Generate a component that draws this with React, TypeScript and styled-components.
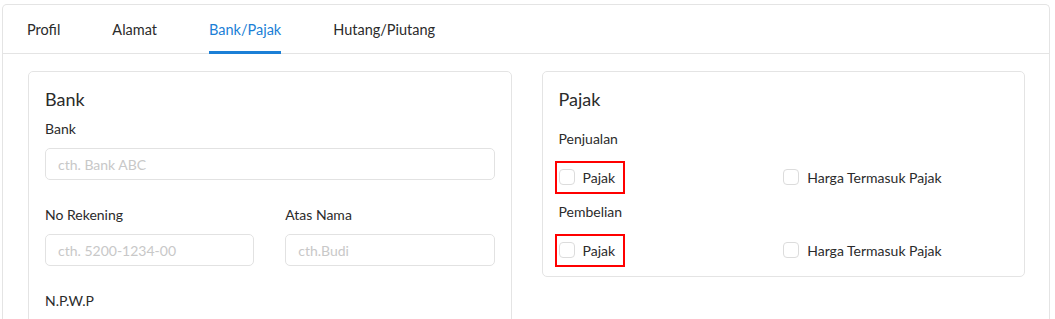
import React from 'react';
import styled, {createGlobalStyle} from 'styled-components';

const GlobalStyle = createGlobalStyle`
  body {
    margin: 0;
    background: #fff;
    font-family: Lato, "Liberation Sans", sans-serif;
    color: #333;
  }
  * {
    box-sizing: border-box;
  }
`;

const Page = styled.div`
  padding: 4px 5px 0 2px;
`;

const Panel = styled.div`
  border: 1px solid #e4e4e4;
  border-bottom: none;
  border-radius: 5px 5px 0 0;
  height: 315px;
  overflow: hidden;
`;

const TabBar = styled.div`
  display: flex;
  gap: 52px;
  height: 49px;
  padding: 0 24px;
  border-bottom: 1px solid #e4e4e4;
`;

const Tab = styled.div<{$active?: boolean}>`
  display: flex;
  align-items: center;
  font-size: 14.5px;
  color: ${props => (props.$active ? '#1b7fd6' : '#2b2b2b')};
  border-bottom: 3px solid ${props => (props.$active ? '#1b7fd6' : 'transparent')};
  padding-top: 3px;
  margin-bottom: -1px;
`;

const Content = styled.div`
  display: grid;
  grid-template-columns: 1fr 1fr;
  gap: 30px;
  padding: 17px 24px 0 25px;
  align-items: start;
`;

const Card = styled.div`
  border: 1px solid #e4e4e4;
  border-radius: 5px;
  padding: 16px 16px 16px;
`;

const CardTitle = styled.div`
  font-size: 18px;
  line-height: 22px;
  color: #2b2b2b;
`;

const Field = styled.div<{$top: number}>`
  display: flex;
  flex-direction: column;
  margin-top: ${props => props.$top}px;
`;

const Label = styled.div`
  font-size: 14px;
  line-height: 20px;
  color: #2b2b2b;
  margin-bottom: 9px;
`;

const Input = styled.input`
  height: 32px;
  width: 100%;
  border: 1px solid #e2e2e2;
  border-radius: 5px;
  padding: 0 12px;
  font-family: inherit;
  font-size: 14px;
  color: #333;
  outline: none;
  &::placeholder {
    color: #c8c8c8;
  }
`;

const FieldRow = styled.div`
  display: grid;
  grid-template-columns: 1fr 1fr;
  gap: 31px;
`;

const SubTitle = styled.div<{$top: number}>`
  font-size: 14px;
  line-height: 20px;
  color: #2b2b2b;
  margin-top: ${props => props.$top}px;
`;

const CheckRow = styled.div<{$top: number}>`
  display: grid;
  grid-template-columns: 1fr 1fr;
  margin-top: ${props => props.$top}px;
`;

const CheckItem = styled.label<{$marked?: boolean}>`
  display: inline-flex;
  align-items: center;
  gap: 8px;
  height: 20px;
  justify-self: start;
  font-size: 14px;
  color: #2b2b2b;
  position: relative;
  &::after {
    content: '';
    display: ${props => (props.$marked ? 'block' : 'none')};
    position: absolute;
    top: -6px;
    bottom: -7px;
    left: -4px;
    right: -10px;
    border: 2px solid #f00;
  }
`;

const Box = styled.span`
  width: 16px;
  height: 16px;
  border: 1px solid #dcdcdc;
  border-radius: 4px;
  background: #fff;
`;

const Check = ({label, marked}: {label: string; marked?: boolean}) => (
  <CheckItem $marked={marked}>
    <Box />
    {label}
  </CheckItem>
);

export default function App() {
  return (
    <Page>
      <GlobalStyle />
      <Panel>
        <TabBar>
          <Tab>Profil</Tab>
          <Tab>Alamat</Tab>
          <Tab $active>Bank/Pajak</Tab>
          <Tab>Hutang/Piutang</Tab>
        </TabBar>
        <Content>
          <Card>
            <CardTitle>Bank</CardTitle>
            <Field $top={9}>
              <Label>Bank</Label>
              <Input placeholder="cth. Bank ABC" />
            </Field>
            <FieldRow>
              <Field $top={25}>
                <Label>No Rekening</Label>
                <Input placeholder="cth. 5200-1234-00" />
              </Field>
              <Field $top={25}>
                <Label>Atas Nama</Label>
                <Input placeholder="cth.Budi" />
              </Field>
            </FieldRow>
            <Field $top={25}>
              <Label>N.P.W.P</Label>
              <Input placeholder="cth. 00.000.000.0-000.000" />
            </Field>
          </Card>
          <Card>
            <CardTitle>Pajak</CardTitle>
            <SubTitle $top={19}>Penjualan</SubTitle>
            <CheckRow $top={18}>
              <Check label="Pajak" marked />
              <Check label="Harga Termasuk Pajak" />
            </CheckRow>
            <SubTitle $top={15}>Pembelian</SubTitle>
            <CheckRow $top={18}>
              <Check label="Pajak" marked />
              <Check label="Harga Termasuk Pajak" />
            </CheckRow>
          </Card>
        </Content>
      </Panel>
    </Page>
  );
}
